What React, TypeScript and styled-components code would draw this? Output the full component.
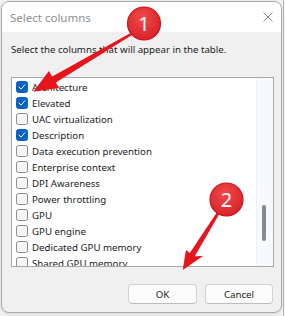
import React from "react";
import styled, { createGlobalStyle } from "styled-components";

const Global = createGlobalStyle`
  html, body { margin: 0; padding: 0; }
  body {
    background: #f3f3f3;
    font-family: "Noto Sans", "Segoe UI", sans-serif;
    overflow: hidden;
  }
  * { box-sizing: border-box; }
`;

const Page = styled.div`
  position: relative;
  width: 285px;
  height: 316px;
  padding: 1px 0 0 1px;
  background: linear-gradient(to right, transparent 283px, #c9b9a9 283px, #c9b9a9 284px, transparent 284px) #f3f3f3;
`;

const Dialog = styled.div`
  width: 281px;
  height: 312px;
  border: 1px solid #a9a9a9;
  border-radius: 8px;
  background: #f0f0f0;
  display: flex;
  flex-direction: column;
  overflow: hidden;
  box-shadow: 0 1px 4px rgba(0, 0, 0, 0.12);
`;

const TitleBar = styled.div`
  height: 30px;
  flex: none;
  background: #ffffff;
  display: flex;
  align-items: center;
  justify-content: space-between;
  padding: 0 8px 0 8px;
`;

const Title = styled.span`
  font-size: 11.5px;
  color: #8e8e8e;
`;

const Close = styled.svg`
  width: 10px;
  height: 10px;
  display: block;
`;

const Body = styled.div`
  flex: 1;
  display: flex;
  flex-direction: column;
  padding: 11px 7px 8px 9px;
`;

const Description = styled.p`
  margin: 0;
  font-size: 9.7px;
  line-height: 14px;
  color: #1b1b1b;
`;

const ListBox = styled.div`
  margin-top: 20px;
  height: 190px;
  border: 1px solid #a8a8a8;
  background: #ffffff;
  display: flex;
`;

const List = styled.div`
  flex: 1;
  padding: 1px 0 0 4px;
  overflow: hidden;
`;

const Row = styled.div`
  height: 16px;
  display: flex;
  align-items: center;
  gap: 4px;
  font-size: 9.7px;
  color: #1b1b1b;
  white-space: nowrap;
`;

const Box = styled.span<{ $checked: boolean }>`
  width: 12px;
  height: 12px;
  flex: none;
  border-radius: 2.5px;
  display: flex;
  align-items: center;
  justify-content: center;
  background: ${(p) => (p.$checked ? "#0a62c4" : "#f6f6f6")};
  border: 1px solid ${(p) => (p.$checked ? "#0a62c4" : "#8d8d8d")};
`;

const Track = styled.div`
  width: 17px;
  flex: none;
  background: #f7f9fb;
  border-left: 1px solid #eef2f7;
  padding: 127px 0 0 5px;
`;

const Thumb = styled.div`
  width: 4px;
  height: 36px;
  border-radius: 2px;
  background: #8a8a8a;
`;

const Buttons = styled.div`
  margin-top: 17px;
  display: flex;
  justify-content: flex-end;
  gap: 8px;
  padding-right: 1px;
`;

const Button = styled.button<{ $w: number }>`
  width: ${(p) => p.$w}px;
  height: 20px;
  margin: 0;
  padding: 0;
  border: 1px solid #d2d2d2;
  border-bottom-color: #bdbdbd;
  border-radius: 4px;
  background: #fbfbfb;
  font-family: "Noto Sans", "Segoe UI", sans-serif;
  font-size: 9.7px;
  color: #1b1b1b;
`;

const Overlay = styled.svg`
  position: absolute;
  left: 0;
  top: 0;
  width: 285px;
  height: 316px;
  pointer-events: none;
`;

const items: [string, boolean][] = [
  ["Architecture", true],
  ["Elevated", true],
  ["UAC virtualization", false],
  ["Description", true],
  ["Data execution prevention", false],
  ["Enterprise context", false],
  ["DPI Awareness", false],
  ["Power throttling", false],
  ["GPU", false],
  ["GPU engine", false],
  ["Dedicated GPU memory", false],
  ["Shared GPU memory", false],
];

const Check = () => (
  <svg width="8" height="8" viewBox="0 0 8 8">
    <path d="M1.2 4.2 L3.1 6 L6.8 1.9" fill="none" stroke="#fff" strokeWidth="1" strokeLinecap="round" strokeLinejoin="round" />
  </svg>
);

const Badge = ({ cx, cy, n }: { cx: number; cy: number; n: string }) => (
  <g>
    <circle cx={cx} cy={cy} r={16.5} fill="url(#badge)" stroke="#c8141c" strokeWidth="1.2" />
    <text
      x={cx}
      y={cy + 7}
      textAnchor="middle"
      fontFamily="'Noto Sans', sans-serif"
      fontSize="20"
      fill="#ffffff"
    >
      {n}
    </text>
  </g>
);

export default function App() {
  return (
    <>
      <Global />
      <Page>
        <Dialog>
          <TitleBar>
            <Title>Select columns</Title>
            <Close viewBox="0 0 10 10">
              <path d="M0.5 0.5 L9.5 9.5 M9.5 0.5 L0.5 9.5" stroke="#8a8a8a" strokeWidth="1" />
            </Close>
          </TitleBar>
          <Body>
            <Description>Select the columns that will appear in the table.</Description>
            <ListBox>
              <List>
                {items.map(([label, checked]) => (
                  <Row key={label}>
                    <Box $checked={checked}>{checked && <Check />}</Box>
                    {label}
                  </Row>
                ))}
              </List>
              <Track>
                <Thumb />
              </Track>
            </ListBox>
            <Buttons>
              <Button $w={69}>OK</Button>
              <Button $w={68}>Cancel</Button>
            </Buttons>
          </Body>
        </Dialog>
        <Overlay viewBox="0 0 285 316">
          <defs>
            <radialGradient id="badge" cx="0.45" cy="0.35" r="0.7">
              <stop offset="0" stopColor="#f04a4a" />
              <stop offset="1" stopColor="#d62026" />
            </radialGradient>
          </defs>
          <polygon
            points="132.4,32 52.2,76.5 48.9,70.9 33.3,91.7 59.1,88.1 55.8,82.5 133.6,34"
            fill="#e8141b"
          />
          <polygon
            points="218.9,209.3 189.8,253.1 186,250 182.7,270 203,256 194.8,256.3 221.1,210.7"
            fill="#e8141b"
          />
          <Badge cx={144} cy={23.5} n="1" />
          <Badge cx={226.5} cy={199.5} n="2" />
        </Overlay>
      </Page>
    </>
  );
}
